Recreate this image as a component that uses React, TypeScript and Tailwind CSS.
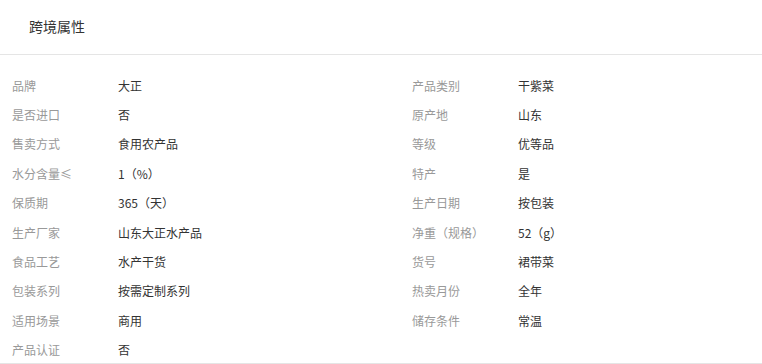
const left: [string, string][] = [
  ["品牌", "大正"],
  ["是否进口", "否"],
  ["售卖方式", "食用农产品"],
  ["水分含量≤", "1（%）"],
  ["保质期", "365（天）"],
  ["生产厂家", "山东大正水产品"],
  ["食品工艺", "水产干货"],
  ["包装系列", "按需定制系列"],
  ["适用场景", "商用"],
  ["产品认证", "否"],
];

const right: [string, string][] = [
  ["产品类别", "干紫菜"],
  ["原产地", "山东"],
  ["等级", "优等品"],
  ["特产", "是"],
  ["生产日期", "按包装"],
  ["净重（规格）", "52（g）"],
  ["货号", "裙带菜"],
  ["热卖月份", "全年"],
  ["储存条件", "常温"],
];

const Column = ({ rows }: { rows: [string, string][] }) => (
  <div className="flex flex-col w-[400px] shrink-0">
    {rows.map(([k, v]) => (
      <div key={k} className="flex items-center h-[29.4px] text-[12px]">
        <span className="w-[106px] text-[#999]">{k}</span>
        <span className="text-[#333]">{v}</span>
      </div>
    ))}
  </div>
);

export default function App() {
  return (
    <div
      className="w-[762px] h-[364px] overflow-hidden bg-white border-b border-[#e5e5e5] box-border"
      style={{ fontFamily: '"Noto Sans CJK SC", "Liberation Sans", sans-serif' }}
    >
      <div className="h-[55px] flex items-center pl-[29px] pb-[2px] border-b border-[#e5e5e5] text-[14px] text-[#333]">
        跨境属性
      </div>
      <div className="flex pl-[12px] pt-[16px]">
        <Column rows={left} />
        <Column rows={right} />
      </div>
    </div>
  );
}
